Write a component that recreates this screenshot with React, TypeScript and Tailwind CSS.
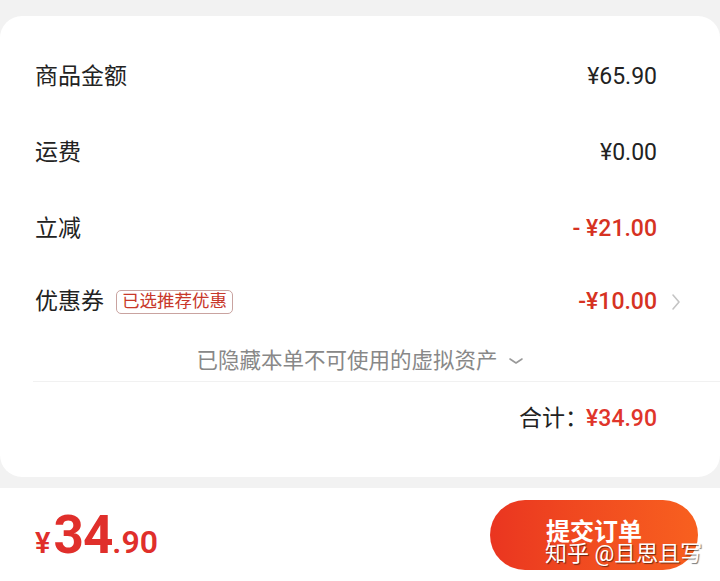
export default function App() {
  const font = { fontFamily: "Roboto, 'Noto Sans CJK SC', sans-serif" };
  return (
    <div className="w-[720px] h-[581px] bg-[#f2f2f2] overflow-hidden flex flex-col" style={font}>
      <div className="mt-[16px] bg-white rounded-[22px] pt-[23px] pb-[21px] text-[#222]">
        <div className="h-[76px] flex items-center justify-between pl-[35px] pr-[63px]">
          <span className="text-[23px]">商品金额</span>
          <span className="text-[23px]">¥65.90</span>
        </div>
        <div className="h-[76px] flex items-center justify-between pl-[35px] pr-[63px]">
          <span className="text-[23px]">运费</span>
          <span className="text-[23px]">¥0.00</span>
        </div>
        <div className="h-[76px] flex items-center justify-between pl-[35px] pr-[63px]">
          <span className="text-[23px]">立减</span>
          <span className="text-[23px] font-medium text-[#d63222]">- ¥21.00</span>
        </div>
        <div className="h-[70px] flex items-center justify-between pl-[35px] pr-[63px]">
          <div className="flex items-center gap-[12px]">
            <span className="text-[23px]">优惠券</span>
            <span className="h-[24px] px-[5px] flex items-center text-[17.5px] leading-none text-[#c8382a] border border-[#c9a3a0] rounded-[5px]">
              已选推荐优惠
            </span>
          </div>
          <span className="relative text-[23px] font-medium text-[#d63222]">
            -¥10.00
            <svg className="absolute left-full top-1/2 -translate-y-1/2 ml-[14px]" width="10" height="18" viewBox="0 0 10 18">
              <path d="M2 2 L8 9 L2 16" fill="none" stroke="#c4c4c4" strokeWidth="1.6" strokeLinecap="round" strokeLinejoin="round" />
            </svg>
          </span>
        </div>
        <div className="h-[44px] flex items-center justify-center gap-[10px] text-[21.5px] text-[#888] pt-[4px]">
          <span>已隐藏本单不可使用的虚拟资产</span>
          <svg width="16" height="10" viewBox="0 0 16 10">
            <path d="M2 3 L8 7 L14 3" fill="none" stroke="#999" strokeWidth="1.6" strokeLinecap="round" strokeLinejoin="round" />
          </svg>
        </div>
        <div className="ml-[33px] h-px bg-[#f1f1f1]" />
        <div className="h-[74px] flex items-center justify-end pr-[63px] text-[23px]">
          <span className="text-[#222]">合计：</span>
          <span className="font-medium text-[#e0352b] -ml-[2px]">¥34.90</span>
        </div>
      </div>
      <div className="mt-[11px] flex-1 bg-white flex items-center justify-between pl-[35px] pr-[22px]">
        <div className="flex items-baseline text-[#e02f2b] font-semibold pt-[6px]">
          <span className="text-[29px] mr-[3px]">¥</span>
          <span className="text-[53px] font-bold leading-none tracking-[-1px]">34</span>
          <span className="text-[32px]">.90</span>
        </div>
        <div className="relative w-[208px] h-[70px] rounded-full bg-gradient-to-r from-[#ea3520] to-[#f8601f] flex items-center justify-center">
          <span className="text-white text-[24px] font-bold mb-[6px]">提交订单</span>
          <span className="absolute left-[55px] top-[37px] whitespace-nowrap text-white text-[22px] [text-shadow:1px_1px_1px_rgba(0,0,0,0.55)]">
            知乎 @且思且写
          </span>
        </div>
      </div>
    </div>
  );
}
